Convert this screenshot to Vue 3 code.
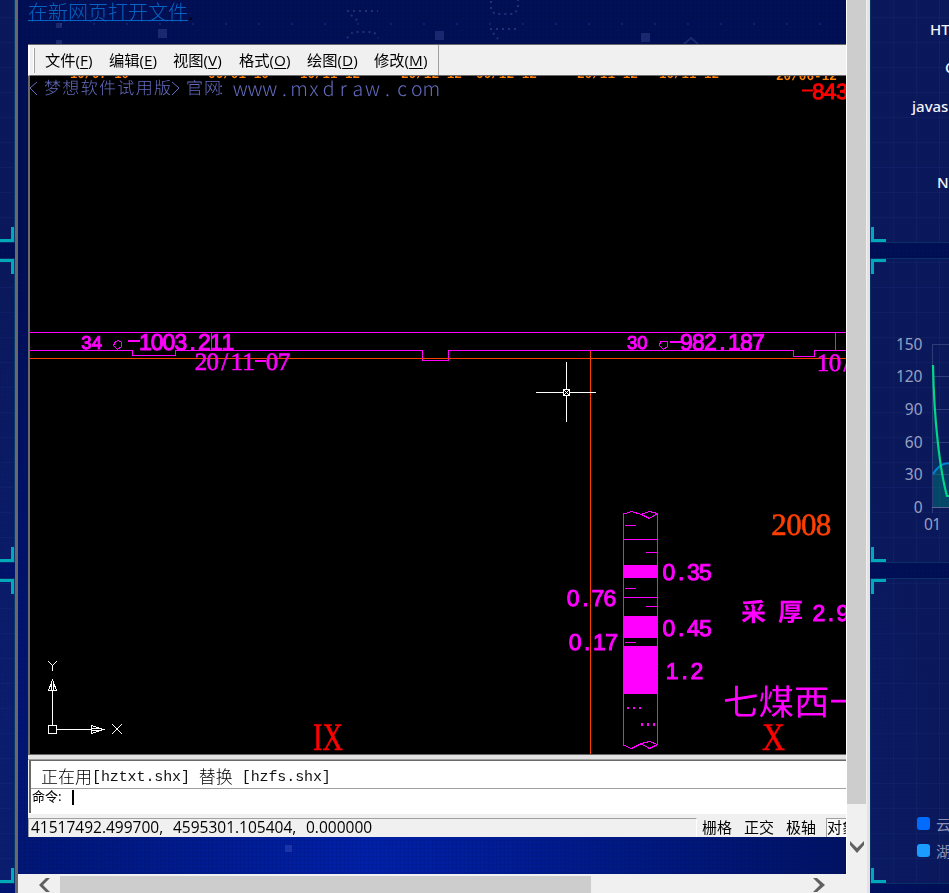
<script setup>
const menus = [
  { name: '文件', key: 'F', w: 64 },
  { name: '编辑', key: 'E', w: 64 },
  { name: '视图', key: 'V', w: 66 },
  { name: '格式', key: 'O', w: 68 },
  { name: '绘图', key: 'D', w: 67 },
  { name: '修改', key: 'M', w: 56 }
]
const modes = ['栅格', '正交', '极轴']
const skills = ['HT', 'C', 'javas', '', 'N']
const ticks = [150, 120, 90, 60, 30, 0]
const dates = [
  { x: 70, w: 59, t: '10/07-10' }, { x: 208, w: 61, t: '06/01-10' },
  { x: 300, w: 60, t: '10/11-12' }, { x: 401, w: 61, t: '20/12-12' },
  { x: 476, w: 61, t: '06/12-12' }, { x: 577, w: 61, t: '20/11-12' },
  { x: 659, w: 60, t: '10/11-12' }
]
// Plotter lettering: every character is centred in a cell of equal width.
const cells = (x, step, text) => [...text].map((_, i) => (x + (i + 0.5) * step).toFixed(1)).join(' ')
const gothic = [
  { x: 81, y: 349, s: 18.5, c: 10.5, t: '34' },
  { x: 627, y: 349, s: 18.5, c: 10.2, t: '30' },
  { x: 139.5, y: 350, s: 23, c: 11.8, t: '1003.211' },
  { x: 680.5, y: 350, s: 23, c: 12, t: '982.187' },
  { x: 663, y: 580, s: 23, c: 12.1, t: '0.35' },
  { x: 567, y: 606, s: 23, c: 12.3, t: '0.76' },
  { x: 663, y: 635.5, s: 23, c: 12.1, t: '0.45' },
  { x: 569, y: 650, s: 23, c: 12.2, t: '0.17' },
  { x: 666, y: 679, s: 23, c: 12.4, t: '1.2' },
  { x: 813, y: 621, s: 23, c: 12, t: '2.9' }
]
</script>

<template>
  <div class="screen">
    <aside class="left-side">
      <div class="card edge first"></div>
      <div class="card edge second"></div>
      <div class="card edge third"></div>
    </aside>

    <main class="dialog">
      <div class="view">
        <div class="page">
          <svg class="specks" width="828" height="874" viewBox="18 0 828 874">
            <g fill="#9ab0ff" opacity=".16">
              <rect x="158" y="29" width="9" height="9" /><rect x="435" y="31" width="9" height="9" />
              <rect x="641" y="33" width="9" height="9" /><rect x="56" y="23" width="6" height="5" />
              <rect x="56" y="40" width="6" height="4" /><rect x="285" y="845" width="7" height="7" />
            </g>
            <g fill="none" stroke="#a4b8ff" stroke-width="2" stroke-dasharray="2 4" opacity=".2">
              <path d="M347 11H378M351 15L358 21M347 38L353 32H374L378 38M491 1V10L495 14H514L518 9V0M490 29H519M493 33L498 39" />
              <path d="M60 24H846" stroke-dasharray="2 31" opacity=".55" />
            </g>
            <path d="M684 44L691 38L698 44" fill="none" stroke="#aabbff" stroke-width="2" opacity=".15" />
          </svg>
          <div class="open-line"><a>在新网页打开文件</a><span>.</span></div>
          <section class="cad">
            <nav class="menu">
              <i class="grip"></i>
              <div class="menu-items">
                <span v-for="m in menus" :key="m.key" :style="{ width: m.w + 'px' }">{{ m.name }}(<u>{{ m.key }}</u>)</span>
              </div>
            </nav>
            <svg class="drawing" width="816" height="678" viewBox="30 76 816 678" text-rendering="geometricPrecision">
              <g class="date" fill="#ff8000">
                <text v-for="d in dates" :key="d.x" :x="d.x" y="78" :textLength="d.w" lengthAdjust="spacingAndGlyphs">{{ d.t }}</text>
                <text x="776" y="80" textLength="61" lengthAdjust="spacingAndGlyphs">20/06-12</text>
              </g>
              <g class="trial" fill="#646cc0">
                <path d="M37 82L30 88L37 95M172 82L179 88L172 95" fill="none" stroke="#646cc0" />
                <text x="44" y="94" textLength="127">梦想软件试用版</text>
                <text x="186" y="94" textLength="35">官网</text>
                <text x="219" y="94">:</text>
                <text class="url" :x="cells(233, 14.7, 'www.mxdraw.com')" y="95.500">www.mxdraw.com</text>
              </g>
              <g class="gothic alert">
                <path d="M802 90.500H813" fill="none" stroke="#f00" stroke-width="2" />
                <text :x="cells(812.5, 11.8, '843')" y="99" font-size="22">843</text>
              </g>

              <g fill="none" stroke="#f0f" shape-rendering="crispEdges">
                <path d="M30 332.500H846M30 350.500H132.500V355.500H175.500V350.500H422.500V360.500H448.500V350.500H793.500V356.500H814.500V350.500H846M211.500 333V350M835.500 333V350" />
                <path d="M115.500 341.500L118.500 340.500L121.500 342.500V346.500L117.500 349.500L113.500 345.500ZM660.500 341.500H667.500V346.500L663.500 349.500L659.500 345.500Z" />
                <path d="M128 341H140M670 342H682" stroke-width="2" />
              </g>
              <g fill="none" stroke="#ff3f00" shape-rendering="crispEdges">
                <path d="M30 358.500H846M590.500 351V754" />
              </g>
              <g fill="#f0f">
                <g class="gothic">
                  <text v-for="g in gothic" :key="g.t" :x="cells(g.x, g.c, g.t)" :y="g.y" :font-size="g.s">{{ g.t }}</text>
                </g>
                <g class="roman pink" font-size="25">
                  <text :x="cells(195, 11.9, '20/11')" y="370">20/11</text>
                  <text :x="cells(266, 11.9, '07')" y="370">07</text>
                  <path d="M255 361H266" stroke="#f0f" stroke-width="2" />
                  <text :x="cells(817, 12, '10/')" y="371">10/</text>
                </g>
                <g class="cjk">
                  <text x="741" y="621" font-size="25">采</text><text x="778" y="621" font-size="25">厚</text>
                  <text class="song" x="723" y="715" font-size="35.500">七煤西一</text>
                </g>
              </g>
              <text class="roman orange" :x="cells(771.5, 14.9, '2008')" y="535" font-size="31">2008</text>
              <g class="numeral" font-size="39">
                <text x="313" y="750" textLength="30" lengthAdjust="spacingAndGlyphs">IX</text>
                <text x="762" y="750" textLength="23" lengthAdjust="spacingAndGlyphs">X</text>
              </g>

              <g fill="none" stroke="#f0f" shape-rendering="crispEdges">
                <path d="M623.500 514V745L631.500 748.500L641.500 743.500L649.500 741.500L657.500 744.500V514M623.500 514L631.500 511.500L641.500 514.500L649.500 518.500L657.500 513.500L649.500 511.500L640.500 514.500M640.500 743.500L649.500 748.500L657.500 744.500" />
                <path d="M623 539.500H657M623 597.500H657M625 525.500H636M646 552.500H657M625 588.500H636M646 606.500H657M625 642.500H636" />
                <path d="M627 708H641" stroke-width="2" stroke-dasharray="2 4" />
                <path d="M641 724.500H656" stroke-width="3" stroke-dasharray="2 4" />
              </g>
              <path d="M623 565H658V578H623ZM623 616H658V638H623ZM623 646H658V694H623Z" fill="#f0f" shape-rendering="crispEdges" />

              <g fill="none" stroke="#fff" shape-rendering="crispEdges">
                <path d="M536 392.500H563M570 392.500H596M566.500 362V389M566.500 396V422M563.500 389.500H569.500V395.500H563.500ZM564 390L570 396M569 390L563 396" />
                <path d="M48.500 725.500H56.500V733.500H48.500ZM52.500 725V691M48.500 690.500H56.500L52.500 680ZM51.500 690V684M53.500 690V684M57 729.500H91M91.500 725.500V733.500L103 729.500ZM92 728.500H101M92 730.500H101" />
                <path d="M48 661L52.500 665.500L57 661M52.500 665V671M112 724L122 734M122 724L112 734" />
              </g>
            </svg>
            <div class="splitter"></div>
            <div class="console">
              <pre class="log"><span class="hz">正在用</span>[hztxt.shx] <span class="hz">替换</span> [hzfs.shx]</pre>
              <div class="prompt"><span>命令:</span><i class="caret"></i></div>
            </div>
            <footer class="status">
              <div class="coords"><span class="c1">41517492.499700,</span><span class="c2">4595301.105404,</span><span class="c3">0.000000</span></div>
              <div class="modes"><span v-for="m in modes" :key="m">{{ m }}</span></div>
              <div class="snap">对象</div>
            </footer>
          </section>
        </div>
        <div class="vbar">
          <div class="vthumb"></div>
          <svg width="20" height="70" viewBox="847 804 20 70"><path d="M850 841V845L857 853L864 845V841L857 848Z" fill="#606060" /></svg>
        </div>
      </div>
      <div class="hbar">
        <svg width="42" height="19" viewBox="18 874 42 19"><path d="M46 878H50L43 885L50 892H46L39 885Z" fill="#606060" /></svg>
        <div class="hthumb"></div>
        <svg width="276" height="19" viewBox="591 874 276 19"><path d="M813 878H817L825 885L817 892H813L820 885Z" fill="#606060" /></svg>
      </div>
    </main>

    <aside class="right-side">
      <div class="card first skills"><span v-for="(s, i) in skills" :key="i">{{ s }}</span></div>
      <div class="card second">
        <svg class="chart" width="79" height="304" viewBox="870 258 79 304">
          <g fill="none" stroke="#425087" stroke-opacity=".65" shape-rendering="crispEdges">
            <path d="M932.500 344V513M933 344.500H949M933 376.500H949M933 409.500H949M933 442.500H949M933 474.500H949" />
            <path d="M932 507.500H949" stroke="#8790b4" />
          </g>
          <path d="M933 474Q941 462 949 463V507H933Z" fill="#00887c" opacity=".28" />
          <path d="M933 365C935 420 939 466 947 496H949V507H933Z" fill="#008878" opacity=".2" />
          <path d="M933 474Q941 462 949 463.500" fill="none" stroke="#0184d5" stroke-width="2" />
          <path d="M933 365C934 420 940 471 947 496H950" fill="none" stroke="#00d887" stroke-width="2.200" />
          <text v-for="(t, i) in ticks" :key="t" x="922.500" :y="349.500 + i * 32.700" text-anchor="end">{{ t }}</text>
          <text x="924" y="530" textLength="17">01</text>
        </svg>
      </div>
      <div class="card third legend">
        <div><i class="cloud"></i><span>云</span></div>
        <div><i class="lake"></i><span>湖</span></div>
      </div>
    </aside>
  </div>
</template>

<style>
body { overflow: hidden; background: #000f57; }
</style>

<style scoped>
* { box-sizing: border-box; }
.screen {
  width: 949px; height: 893px; display: grid; grid-template-columns: 15px 855px 79px; overflow: hidden;
  font-family: "Open Sans", "Noto Sans CJK SC", sans-serif;
  background: repeating-linear-gradient(90deg, rgba(0,0,0,.06) 0 1px, transparent 1px 4px),
    repeating-linear-gradient(0deg, rgba(0,0,0,.06) 0 1px, transparent 1px 4px),
    radial-gradient(ellipse 580px 750px at 370px 860px, #0020aa, #000f57);
}
svg { display: block; flex: none; }
.left-side, .right-side { display: flex; flex-direction: column; gap: 15px; overflow: hidden; }
.card {
  flex: none; border: 1px solid #082f66; border-right: 0; overflow: hidden;
  background: linear-gradient(#00a8b9, #00a8b9) 2px 2px / 15px 3px no-repeat,
    linear-gradient(#00a8b9, #00a8b9) 2px 2px / 3px 15px no-repeat,
    linear-gradient(#00a8b9, #00a8b9) left 0 bottom 0 / 15px 3px no-repeat,
    linear-gradient(#00a8b9, #00a8b9) left 0 bottom 0 / 3px 15px no-repeat,
    repeating-linear-gradient(0deg, transparent 0 24px, rgba(80,110,190,.07) 24px 25px),
    repeating-linear-gradient(90deg, transparent 0 22px, rgba(80,110,190,.07) 22px 23px),
    rgba(27,42,104,.38);
  background-position: 0 0, 0 0, 0 100%, 0 100%, 0 0, 0 0, 0 0;
}
.edge {
  border-left: 0; border-right: 1px solid #06386e;
  background-position: right 0 top 0, right 0 top 0, right 0 bottom 0, right 0 bottom 0, 0 0, 0 0, 0 0;
}
.card.first { height: 243px; border-top: 0; background-size: 0 0, 0 0, 15px 3px, 3px 15px, auto, auto, auto; }
.card.second { height: 305px; }
.card.third { height: 306px; }
.dialog { border-left: 3px solid #696969; border-right: 3px solid #e3e3e3; display: flex; flex-direction: column; }
.view { display: flex; height: 874px; }
.page { width: 828px; height: 874px; padding-left: 10px; overflow: hidden; position: relative; }
.specks { position: absolute; left: 0; top: 0; }
.open-line { height: 44px; font: 300 20px/24px "Noto Sans CJK SC", sans-serif; color: #0563c1; position: relative; }
.open-line a { display: inline-block; height: 21px; border-bottom: 1px solid #0563c1; }
.open-line span { color: #000; }
.cad { width: 818px; height: 793px; background: #f0f0f0; border-top: 1px solid #696969; position: relative; }
.menu { height: 31px; border-left: 2px solid #fff; border-bottom: 1px solid #696969; display: flex; padding-left: 3px; }
.grip { width: 2px; height: 25px; margin-top: 3px; border-left: 1px solid #fff; border-right: 1px solid #a0a0a0; }
.menu-items {
  height: 30px; width: 404px; padding-left: 10px; display: flex; border-right: 1px solid #a0a0a0;
  font: 15.300px/31px "Open Sans", "Noto Sans CJK SC", sans-serif; color: #000; white-space: nowrap;
}
.menu-items span { flex: none; }
.menu-items u { text-underline-offset: 2px; }
.drawing { width: 818px; height: 678px; border-left: 2px solid #696969; background: #000; }
.date { font: bold 13px "Liberation Mono", monospace; }
.trial { font: 300 17px "Noto Sans CJK SC", sans-serif; }
.url { font: 300 19.500px "Noto Sans CJK SC", sans-serif; text-anchor: middle; }
.gothic { font-family: "Liberation Sans", sans-serif; stroke: #f0f; stroke-width: 1; text-anchor: middle; }
.alert { fill: #f00; stroke: #f00; }
.roman { font-family: "Liberation Serif", serif; stroke-width: .6; text-anchor: middle; }
.pink { stroke: #f0f; }
.orange { fill: #ff3f00; stroke: #ff3f00; }
.numeral { font-family: "Liberation Serif", serif; fill: #f00; stroke: #f00; stroke-width: .5; }
.cjk { font-family: "Noto Sans CJK SC", sans-serif; font-weight: bold; }
.song { font-weight: 400; }
.splitter { height: 6px; background: #e3e3e3; border-top: 1px solid #696969; border-bottom: 1px solid #a0a0a0; }
.console { height: 53px; margin-left: 1px; border-left: 2px solid #696969; border-top: 1px solid #696969; background: #fff; }
.log {
  margin: 0; height: 28px; padding-left: 10px; border-bottom: 1px solid #a0a0a0; display: flex; white-space: pre;
  font: 15px/34px "Liberation Mono", monospace; letter-spacing: -.1px; color: #111;
}
.hz { font: 300 17px/29px "Noto Sans CJK SC", sans-serif; letter-spacing: 0; color: #000; }
.prompt { height: 24px; padding-left: 1px; display: flex; font: 13px/14px "Noto Sans CJK SC", sans-serif; color: #000; }
.prompt span { width: 40px; }
.caret { width: 2px; height: 15px; margin-top: 1px; background: #000; }
.status { height: 24px; display: flex; padding-top: 4px; border-top: 1px solid #fff; overflow: hidden; font-size: 15px; line-height: 19px; }
.coords {
  width: 669px; height: 19px; border-top: 1px solid #a0a0a0; border-left: 1px solid #a0a0a0; border-right: 1px solid #fff;
  display: flex; padding-left: 2px; font: 15.500px/17px "Open Sans", sans-serif; white-space: nowrap;
}
.c1 { width: 142px; } .c2 { width: 133px; }
.modes { display: flex; gap: 12px; padding-left: 5px; width: 129px; white-space: nowrap; }
.modes span { width: 30px; flex: none; }
.snap { width: 20px; height: 19px; overflow: hidden; white-space: nowrap; border-left: 1px solid #a0a0a0; border-top: 1px solid #a0a0a0; background: #f8f8f8; line-height: 17px; }
.vbar { width: 21px; background: #f0f0f0; border-left: 1px solid #fff; }
.vthumb { width: 19px; height: 804px; background: #cdcdcd; }
.hbar { height: 19px; background: #f0f0f0; display: flex; }
.hthumb { width: 531px; height: 17px; margin-top: 2px; background: #cdcdcd; flex: none; }
.skills { padding-top: 10px; display: flex; flex-direction: column; font: 500 15px/38.250px "Noto Sans", sans-serif; color: #f2f2f6; }
.skills span { height: 38.250px; flex: none; padding-left: 59px; white-space: nowrap; }
.skills span:nth-child(2) { padding-left: 74px; }
.skills span:nth-child(3) { padding-left: 41px; }
.skills span:nth-child(5) { padding-left: 66px; }
.chart { margin: -1px 0 0 -1px; font: 15.500px "Noto Sans", sans-serif; fill: #98a0c0; }
.legend { padding: 231px 0 0 46px; font: 15px/27px "Noto Sans CJK SC", sans-serif; color: #8790b5; }
.legend div { display: flex; align-items: center; gap: 6px; height: 27px; white-space: nowrap; }
.legend i { width: 13px; height: 13px; border-radius: 3px; flex: none; }
.cloud { background: #006cff; }
.lake { background: #1b9cff; }
</style>
